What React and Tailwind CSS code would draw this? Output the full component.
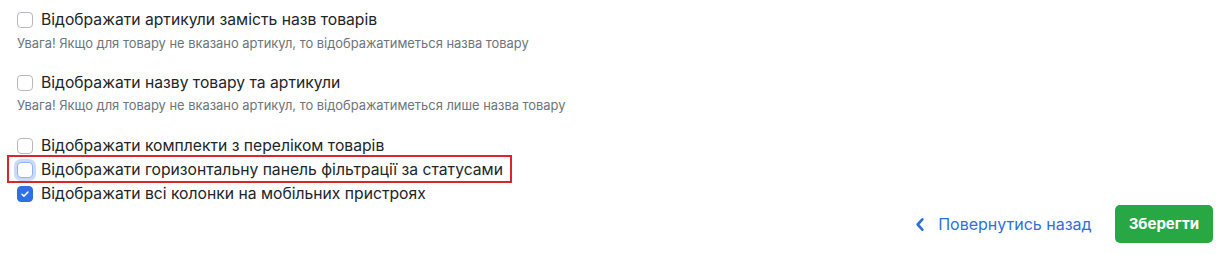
import { useState } from "react"

function Check({ checked, focused, onChange }) {
  return (
    <span
      onClick={onChange}
      className={
        "w-4 h-4 shrink-0 rounded-[4px] border flex items-center justify-center cursor-pointer " +
        (checked
          ? "bg-[#2f6fe4] border-[#2f6fe4]"
          : focused
          ? "bg-white border-[#8fb3f0] ring-[3px] ring-[#c9dafa]"
          : "bg-white border-[#b5b9be]")
      }
    >
      {checked && (
        <svg viewBox="0 0 16 16" className="w-3 h-3" fill="none">
          <path d="M4 8.3l2.6 2.5L12 5.4" stroke="white" strokeWidth="2" strokeLinecap="round" strokeLinejoin="round" />
        </svg>
      )}
    </span>
  )
}

function Option({ label, checked, focused, onChange }) {
  return (
    <label className="flex items-center gap-2 h-6 text-[15.7px] text-[#212529] cursor-pointer">
      <Check checked={checked} focused={focused} onChange={onChange} />
      <span>{label}</span>
    </label>
  )
}

function App() {
  const [values, setValues] = useState([false, false, false, false, true])
  const toggle = (i) => setValues(values.map((v, j) => (j === i ? !v : v)))

  return (
    <div className="font-['Inter',sans-serif] bg-white w-[1221px] h-[254px] pl-[17px] pr-2 pt-2">

      <Option label="Відображати артикули замість назв товарів" checked={values[0]} onChange={() => toggle(0)} />
      <p className="text-[12.9px] leading-[18px] text-[#6c757d] mt-[3px]">Увага! Якщо для товару не вказано артикул, то відображатиметься назва товару</p>

      <div className="mt-[18px]">
        <Option label="Відображати назву товару та артикули" checked={values[1]} onChange={() => toggle(1)} />
      </div>
      <p className="text-[12.9px] leading-[18px] text-[#6c757d] mt-[2px]">Увага! Якщо для товару не вказано артикул, то відображатиметься лише назва товару</p>

      <div className="mt-[19px]">
        <Option label="Відображати комплекти з переліком товарів" checked={values[2]} onChange={() => toggle(2)} />
        <div className="relative w-fit">
          <Option label="Відображати горизонтальну панель фільтрації за статусами" checked={values[3]} focused onChange={() => toggle(3)} />
          <span className="absolute -left-[10px] -right-[9px] -top-[3px] -bottom-[1px] border-2 border-[#d7262c] pointer-events-none"></span>
        </div>
        <Option label="Відображати всі колонки на мобільних пристроях" checked={values[4]} onChange={() => toggle(4)} />
      </div>

      <div className="flex justify-end items-center gap-[23px] mt-[-1px]">
        <button className="flex items-center gap-[13px] text-[16px] text-[#2f6fd8] cursor-pointer">
          <svg viewBox="0 0 10 16" className="w-[10px] h-[15px]" fill="none">
            <path d="M7.5 2.5L2.5 8l5 5.5" stroke="currentColor" strokeWidth="2.8" strokeLinecap="round" strokeLinejoin="round" />
          </svg>
          Повернутись назад
        </button>
        <button className="h-[38px] px-[14px] rounded-[5px] bg-[#28a745] text-white text-[15px] font-bold cursor-pointer">
          Зберегти
        </button>
      </div>

    </div>
  )
}

export default App
